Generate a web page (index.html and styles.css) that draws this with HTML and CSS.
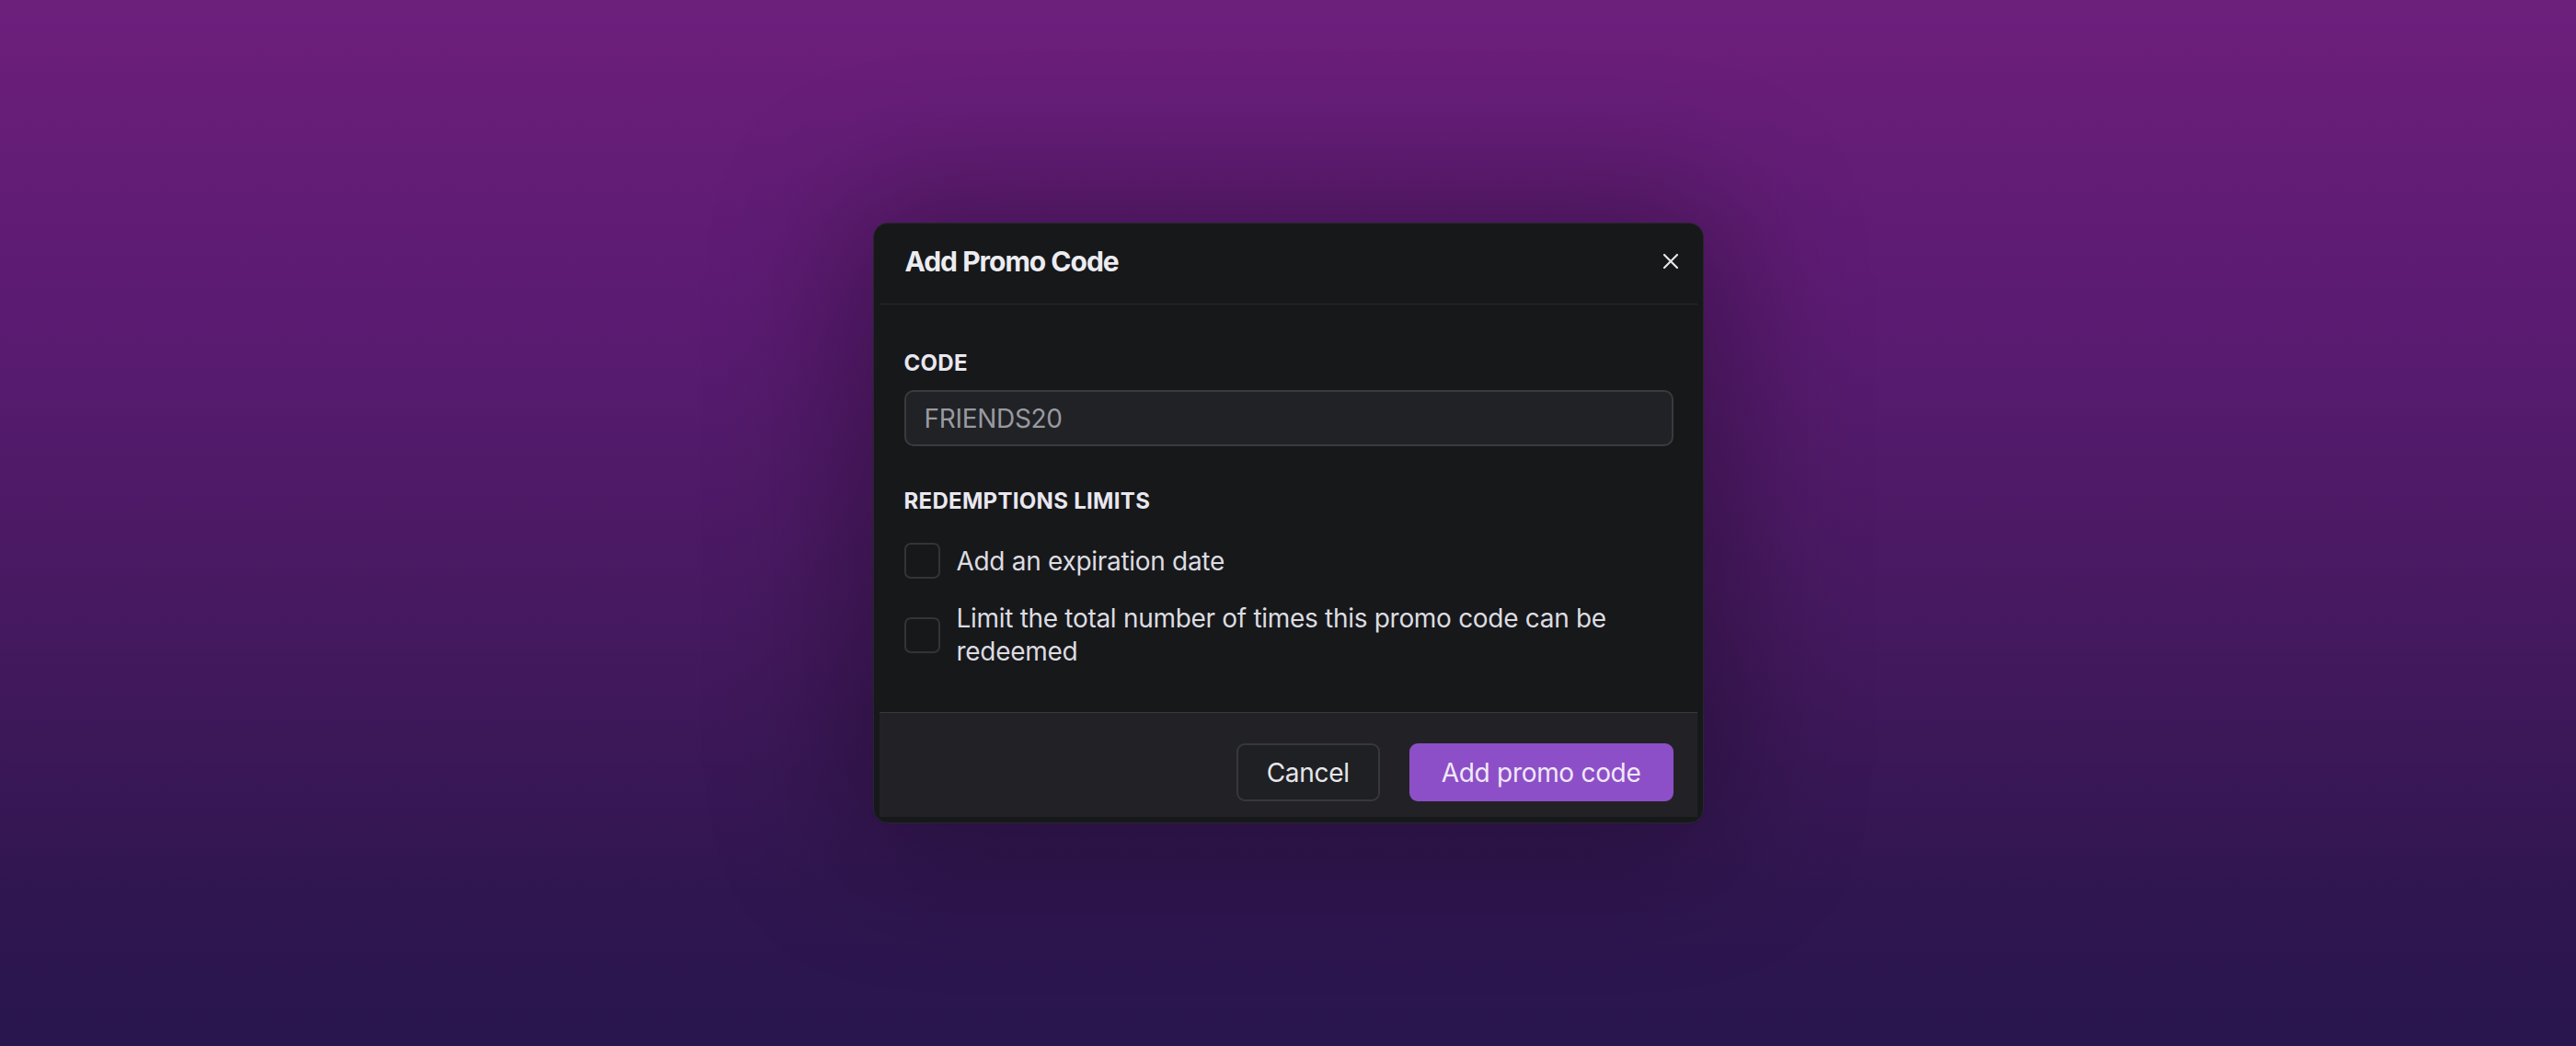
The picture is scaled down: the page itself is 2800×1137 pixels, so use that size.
FILE: index.html
```html
<!DOCTYPE html>
<html lang="en">
<head>
    <meta charset="UTF-8">
    <meta name="viewport" content="width=device-width, initial-scale=1.0">
    <title>Add Promo Code</title>
    <link rel="stylesheet" href="styles.css">
</head>
<body>
    <div class="modal">
        <div class="modal-header">
            <h2 class="modal-title">Add Promo Code</h2>
            <button class="close-btn" aria-label="Close">
                <svg width="18" height="18" viewBox="0 0 18 18" fill="none" stroke="currentColor" stroke-width="2.2" stroke-linecap="round">
                    <path d="M2 2L16 16M16 2L2 16"/>
                </svg>
            </button>
        </div>

        <div class="modal-body">
            <label class="field-label" for="code">Code</label>
            <input id="code" class="text-input" placeholder="FRIENDS20" />

            <div class="field-label section-label">Redemptions limits</div>
            <div class="options">
                <label class="option">
                    <input type="checkbox" class="checkbox" />
                    <span>Add an expiration date</span>
                </label>
                <label class="option">
                    <input type="checkbox" class="checkbox" />
                    <span>Limit the total number of times this promo code can be redeemed</span>
                </label>
            </div>
        </div>

        <div class="modal-footer">
            <button class="btn btn-secondary">Cancel</button>
            <button class="btn btn-primary">Add promo code</button>
        </div>
    </div>
</body>
</html>
```

FILE: styles.css
```css
* { box-sizing: border-box; }
html, body { height: 100%; }
body { margin: 0; font-family: Inter, "Liberation Sans", sans-serif; display: flex; align-items: center; justify-content: center; background: linear-gradient(180deg, #6d1f7c 0%, #5b1b72 30%, #45195f 60%, #301650 85%, #29164f 100%); }

.modal { width: 903px; background: #17181a; border: 1px solid #26272a; border-radius: 16px; padding: 6px; box-shadow: 0 0 150px 30px rgba(0,0,0,0.3); }

.modal-header { display: flex; align-items: flex-start; justify-content: space-between; padding: 17px 20px 28px 28px; border-bottom: 1px solid #28292c; }
.modal-title { margin: 0; font-size: 30px; line-height: 36px; font-weight: 700; letter-spacing: -1px; color: #ececf1; }
.close-btn { background: none; border: none; padding: 0; margin-top: 9px; color: #e6e6eb; cursor: pointer; display: flex; }

.modal-body { padding: 50px 26px 48px 27px; }
.field-label { display: block; font-size: 24px; line-height: 28px; font-weight: 700; letter-spacing: 0.3px; text-transform: uppercase; color: #e9e7f0; margin-bottom: 15px; }
.section-label { margin-top: 46px; margin-bottom: 31px; }

.text-input { width: 100%; height: 61px; background: #212225; border: 2px solid #3a3b3f; border-radius: 10px; padding: 0 20px; font-family: inherit; font-size: 28px; letter-spacing: -0.3px; color: #e0e0e5; outline: none; }
.text-input::placeholder { color: #989aa1; }

.options { display: flex; flex-direction: column; gap: 25px; }
.option { display: flex; align-items: center; gap: 18px; font-size: 28px; line-height: 36px; letter-spacing: -0.3px; color: #dcdce1; cursor: pointer; }
.checkbox { appearance: none; -webkit-appearance: none; margin: 0; flex: none; width: 39px; height: 39px; border: 2px solid #333438; border-radius: 7px; background: transparent; }

.modal-footer { display: flex; justify-content: flex-end; gap: 32px; padding: 33px 26px 17px; background: #222226; border-top: 1px solid #38393d; }
.btn { height: 63px; padding: 0 31px; border-radius: 9px; font-family: inherit; font-size: 28px; letter-spacing: -0.3px; cursor: pointer; }
.btn-secondary { background: #1f2023; border: 2px solid #37383c; color: #e6e6eb; }
.btn-primary { background: #8d4fc8; border: none; color: #efe9f8; padding: 0 35px; }
```
